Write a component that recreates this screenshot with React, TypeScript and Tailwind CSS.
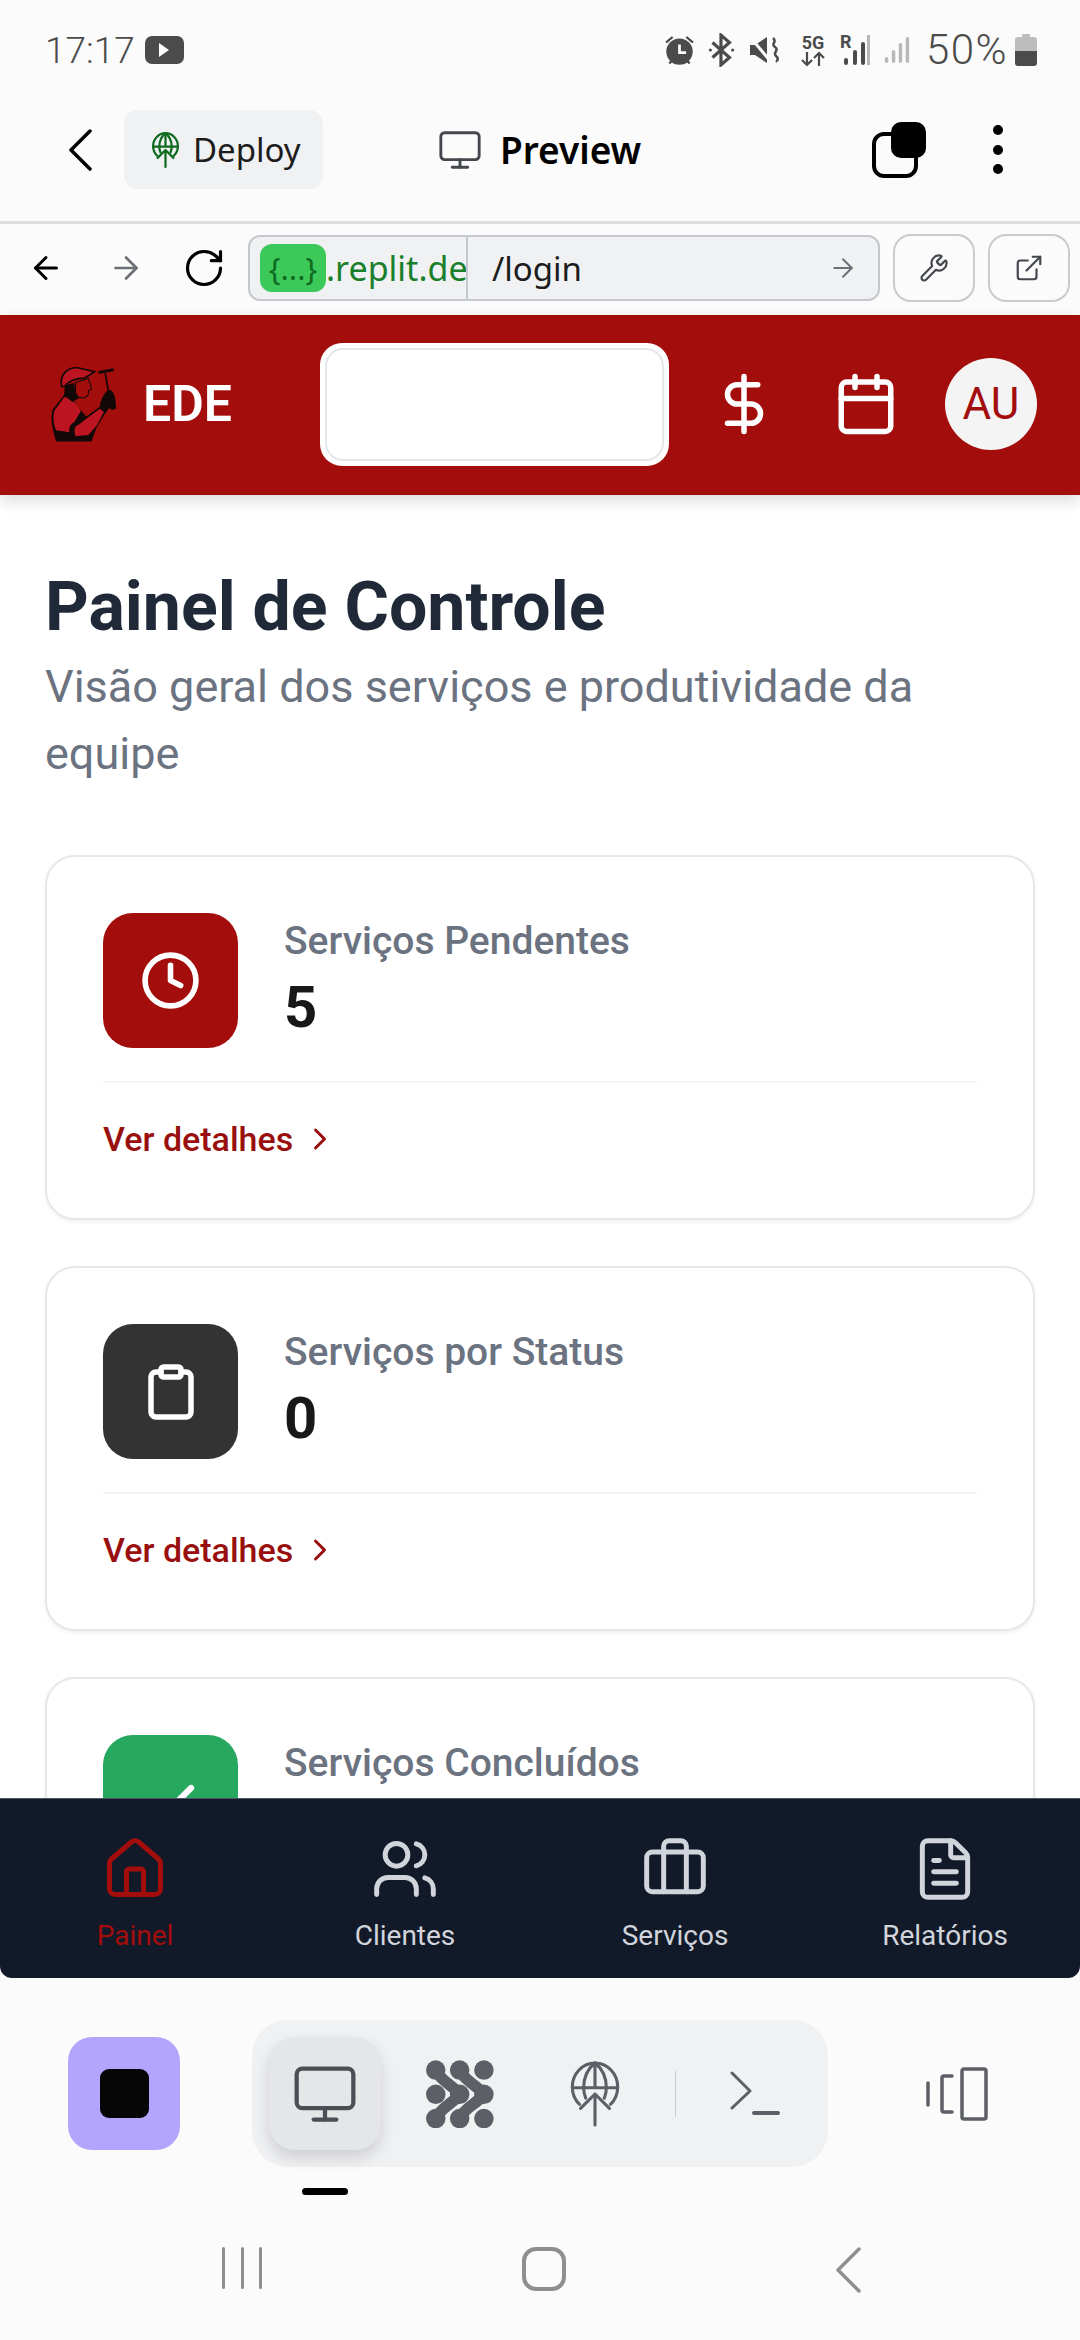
import React from 'react';
import {
  ArrowLeft,
  ArrowRight,
  Briefcase,
  Calendar,
  Check,
  ChevronRight,
  Clipboard,
  Clock,
  DollarSign,
  ExternalLink,
  FileText,
  House,
  Monitor,
  RotateCw,
  Users,
  Wrench,
} from 'lucide-react';

// Globe with an up arrow, used for the deploy tab
const DeployGlobe: React.FC<{ className?: string; strokeWidth?: number }> = ({ className, strokeWidth = 2 }) => (
  <svg viewBox="0 0 24 32" fill="none" stroke="currentColor" strokeWidth={strokeWidth} strokeLinecap="round" strokeLinejoin="round" className={className}>
    <path d="M4.500 21C2.300 19 1 16 1 12.500 1 6.200 6 1 12 1s11 5.200 11 11.500c0 3.500-1.300 6.500-3.500 8.500" />
    <path d="M1 13h22M12 1v12" />
    <path d="M12 1C8.200 4 6.500 8 6.500 13c0 2 .4 3.600 1 5M12 1c3.800 3 5.500 7 5.500 12 0 2-.4 3.600-1 5" />
    <path d="M12 31V16M5 23l7-7 7 7" />
  </svg>
);

// 3x3 dots joined by diagonal links
const AgentIcon: React.FC<{ className?: string }> = ({ className }) => (
  <svg viewBox="78 58 202 202" fill="#5c5f66" className={className}>
    {[107, 178, 250].map((cx) =>
      [88, 160, 232].map((cy) => <circle key={`${cx}-${cy}`} cx={cx} cy={cy} r="29" />),
    )}
    <g fill="none" stroke="#5c5f66" strokeWidth="34">
      <path d="M107 88C125 125 150 125 178 160 150 195 125 195 107 232" />
      <path d="M178 88C196 125 222 125 250 160 222 195 196 195 178 232" />
    </g>
  </svg>
);

const WorkerLogo: React.FC = () => (
  <svg viewBox="95 112 196 224" className="h-[76px] w-[66px]">
    {/* torso, black under the shirt */}
    <path d="M135 196 100 240c-7 24-3 50 10 95h105l15-40 30-50-18-14-42 30-28-32-12-26z" fill="#120808" />
    {/* shirt */}
    <path d="M134 204 105 244c-5 20-2 40 5 58l40 6c-3-14 2-24 14-30l20-34-30-40z" fill="#bc1420" />
    {/* forearm */}
    <path d="M168 290c10-2 20-14 32-22l40-30 12 10-20 38-26 30-38 4c-4-12-4-22 0-30z" fill="#bc1420" />
    {/* hair and neck */}
    <path d="M136 168 134 198l24 20 24-14-14-12-4-30z" fill="#120808" />
    {/* face */}
    <path d="M168 160l38-12 7 22 2 10-8 4-2 14-10 8-18-2-9-12z" fill="#a30d0b" stroke="#120808" strokeWidth="3" strokeLinejoin="round" />
    {/* cap */}
    <path d="M127 172c-8-34 20-66 62-52l36 8-30 19c-24 0-46 6-60 25z" fill="#bc1420" stroke="#120808" strokeWidth="5" strokeLinejoin="round" />
    {/* hammer */}
    <path d="M256 132l9 52" stroke="#120808" strokeWidth="5" fill="none" />
    <path d="M236 131l45-9" stroke="#120808" strokeWidth="8" fill="none" />
    {/* glove */}
    <path d="M240 232c2-20 14-46 28-50 14 2 20 24 20 56l-12 4-8-6-10 14z" fill="#120808" />
  </svg>
);

const StatusIcons: React.FC = () => (
  <div className="flex items-center text-[#4b4b4b]">
    <svg viewBox="0 0 30 30" className="h-[33px] w-[33px]" fill="currentColor">
      <circle cx="15" cy="16" r="12" />
      <path d="M2 7l6-5 1.500 1.500-6 5zM28 7l-6-5-1.500 1.500 6 5zM5 26l3-3 1.500 1.500-3 3zM25 26l-3-3-1.500 1.500 3 3z" />
      <path d="M15 9.500V17h6" stroke="#fbfbfb" strokeWidth="2.500" fill="none" />
    </svg>
    <svg viewBox="0 0 25 32" className="ml-[12px] h-[34px] w-[27px]" fill="none" stroke="currentColor" strokeWidth="3">
      <path d="M4 9l16 14-8 7V2l8 7L4 23" />
      <circle cx="2" cy="16" r="1.500" fill="currentColor" stroke="none" />
      <circle cx="23" cy="16" r="1.500" fill="currentColor" stroke="none" />
    </svg>
    <svg viewBox="0 0 30 30" className="ml-[15px] h-[30px] w-[30px]" fill="currentColor">
      <path d="M0 10h5l12-8v26L5 20H0z" />
      <path d="M1 3l20 24" stroke="#fbfbfb" strokeWidth="3" />
      <path d="M23 3c5 4-3 6 2 9s-3 6 1 9 0 5 1 6" stroke="currentColor" strokeWidth="2.500" fill="none" />
    </svg>
    <div className="ml-[20px] flex w-[26px] flex-col items-center">
      <span className="text-[18px] leading-[17px] font-bold">5G</span>
      <svg viewBox="0 0 26 16" className="h-[16px] w-[26px]" fill="none" stroke="currentColor" strokeWidth="2.200">
        <path d="M7 1v13M2 9l5 5 5-5M19 15V2M14 7l5-5 5 5" />
      </svg>
    </div>
    <div className="ml-[14px] flex h-[32px] w-[30px] items-end">
      <svg viewBox="0 0 30 32" className="h-[32px] w-[30px]">
        <text x="0" y="14" fontSize="18" fontWeight="700" fill="currentColor" fontFamily="Roboto, sans-serif">R</text>
        <rect x="4" y="24" width="4" height="7" rx="2" fill="currentColor" />
        <rect x="13" y="16" width="4" height="15" rx="2" fill="currentColor" />
        <rect x="21" y="8" width="4" height="23" rx="2" fill="currentColor" />
        <rect x="27" y="1" width="3" height="30" fill="#b8b8b8" />
      </svg>
    </div>
    <svg viewBox="0 0 30 32" className="ml-[14px] h-[32px] w-[26px]" fill="#b8b8b8">
      <rect x="1" y="24" width="4" height="7" rx="2" />
      <rect x="9" y="16" width="4" height="15" rx="2" />
      <rect x="17" y="8" width="4" height="23" rx="2" />
      <rect x="25" y="1" width="4" height="30" rx="2" />
    </svg>
    <span className="ml-[16px] w-[82px] text-[42px] leading-none font-light tracking-[1.500px] whitespace-nowrap">50%</span>
    <svg viewBox="0 0 22 32" className="ml-[7px] h-[32px] w-[22px]">
      <path d="M7 0h8v3h4a3 3 0 0 1 3 3v11H0V6a3 3 0 0 1 3-3h4z" fill="#bdbdbd" />
      <path d="M0 17h22v12a3 3 0 0 1-3 3H3a3 3 0 0 1-3-3z" fill="#4b4b4b" />
    </svg>
  </div>
);

interface StatCardProps {
  title: string;
  value: string;
  iconBg: string;
  icon: React.ReactNode;
}

const StatCard: React.FC<StatCardProps> = ({ title, value, iconBg, icon }) => (
  <div className="mb-[46px] h-[365px] shrink-0 rounded-[30px] border-2 border-[#e5e7eb] bg-white px-[56px] pt-[56px] shadow-[0_2px_4px_rgba(0,0,0,0.06)]">
    <div className="flex h-[135px] items-center">
      <div className={`flex h-[135px] w-[135px] items-center justify-center rounded-[30px] ${iconBg}`}>{icon}</div>
      <div className="ml-[46px] flex h-[135px] flex-col pt-[8px]">
        <span className="text-[39px] leading-[40px] font-medium text-[#6b7280]">{title}</span>
        <span className="mt-[11px] text-[58px] leading-[70px] font-bold text-[#18181b]">{value}</span>
      </div>
    </div>
    <div className="mt-[33px] h-[2px] bg-[#f3f4f6]"></div>
    <div className="mt-[36px] flex items-center text-[#990f0d]">
      <span className="text-[34px] leading-[40px] font-medium">Ver detalhes</span>
      <ChevronRight className="ml-[9px] h-[36px] w-[36px]" strokeWidth={2} />
    </div>
  </div>
);

const navItems = [
  { label: 'Painel', icon: House, active: true },
  { label: 'Clientes', icon: Users, active: false },
  { label: 'Serviços', icon: Briefcase, active: false },
  { label: 'Relatórios', icon: FileText, active: false },
];

const App: React.FC = () => {
  return (
    <div className="flex h-[2340px] w-[1080px] flex-col overflow-hidden bg-[#fbfbfb] font-['Roboto',sans-serif]">
      {/* Android status bar */}
      <div className="flex h-[78px] shrink-0 items-center justify-between pt-[22px] pr-[43px] pl-[45px] text-[#4b4b4b]">
        <div className="flex items-center">
          <span className="text-[37px] leading-none font-light">17:17</span>
          <div className="ml-[10px] flex h-[28px] w-[39px] items-center justify-center rounded-[7px] bg-[#4b4b4b]">
            <div className="h-0 w-0 border-y-[7px] border-l-[10px] border-y-transparent border-l-white"></div>
          </div>
        </div>
        <StatusIcons />
      </div>

      {/* Replit tab bar */}
      <div className="flex h-[146px] shrink-0 items-center border-b-[3px] border-[#dcdddf] pl-[68px] font-['Noto_Sans',sans-serif]">
        <svg viewBox="0 0 24 42" className="h-[42px] w-[24px]" fill="none" stroke="#000" strokeWidth="3.500" strokeLinecap="round" strokeLinejoin="round">
          <path d="M22 2 3 21l19 19" />
        </svg>
        <div className="ml-[32px] flex h-[79px] w-[199px] items-center rounded-[14px] bg-[#f0f1f3] pl-[28px]">
          <DeployGlobe className="h-[36px] w-[27px] text-[#0f6b1f]" />
          <span className="ml-[14px] text-[33px] leading-none text-[#1c1c1c]">Deploy</span>
        </div>
        <Monitor className="ml-[114px] h-[46px] w-[46px] text-[#44474d]" strokeWidth={1.500} />
        <span className="ml-[17px] text-[37px] leading-none font-semibold text-black">Preview</span>
        <div className="relative ml-[231px] h-[56px] w-[54px]">
          <div className="absolute bottom-0 left-0 h-[46px] w-[46px] rounded-[12px] border-[4px] border-black"></div>
          <div className="absolute top-0 right-0 h-[36px] w-[35px] rounded-[10px] bg-black"></div>
        </div>
        <div className="ml-[67px] flex h-[49px] flex-col justify-between">
          <div className="h-[10px] w-[10px] rounded-full bg-black"></div>
          <div className="h-[10px] w-[10px] rounded-full bg-black"></div>
          <div className="h-[10px] w-[10px] rounded-full bg-black"></div>
        </div>
      </div>

      {/* Preview address bar */}
      <div className="flex h-[91px] shrink-0 items-center pb-[3px] pl-[28px] font-['Noto_Sans',sans-serif]">
        <ArrowLeft className="h-[36px] w-[36px] text-black" strokeWidth={2} />
        <ArrowRight className="ml-[44px] h-[36px] w-[36px] text-[#6b6f76]" strokeWidth={1.750} />
        <RotateCw className="ml-[38px] h-[44px] w-[44px] text-black" strokeWidth={1.750} />
        <div className="ml-[22px] flex h-[66px] w-[632px] items-center overflow-hidden rounded-[12px] border-2 border-[#c4c7cb] bg-[#f0f1f3]">
          <div className="flex h-full w-[218px] shrink-0 items-center overflow-hidden border-r-2 border-[#c4c7cb] pl-[10px]">
            <span className="flex h-[48px] w-[66px] shrink-0 items-center justify-center rounded-[12px] bg-[#3cc95a] text-[31px] leading-none text-[#0f6b1f]">{'{...}'}</span>
            <span className="text-[34px] leading-none whitespace-nowrap text-[#1a7f2b]">.replit.dev</span>
          </div>
          <span className="ml-[24px] flex-1 text-[33px] leading-none text-[#1c1c1c]">/login</span>
          <ArrowRight className="mr-[20px] h-[30px] w-[30px] text-[#6b6f76]" strokeWidth={1.500} />
        </div>
        <div className="ml-[13px] flex h-[68px] w-[82px] items-center justify-center rounded-[18px] border-2 border-[#c9cbcf]">
          <Wrench className="h-[30px] w-[30px] text-[#44474d]" strokeWidth={1.750} />
        </div>
        <div className="ml-[13px] flex h-[68px] w-[82px] items-center justify-center rounded-[18px] border-2 border-[#c9cbcf]">
          <ExternalLink className="h-[30px] w-[30px] text-[#44474d]" strokeWidth={1.750} />
        </div>
      </div>

      {/* App header */}
      <header className="relative z-10 flex h-[180px] shrink-0 items-center bg-[#a30d0b] pb-[2px] pl-[51px] shadow-[0_6px_14px_rgba(0,0,0,0.14)]">
        <WorkerLogo />
        <span className="ml-[26px] text-[50px] leading-none font-semibold text-white">EDE</span>
        <div className="ml-[88px] h-[123px] w-[349px] rounded-[22px] bg-white p-[5px]">
          <div className="h-full w-full rounded-[18px] border-2 border-[#e5e7eb]"></div>
        </div>
        <DollarSign className="ml-[42px] h-[66px] w-[66px] text-white" strokeWidth={2} />
        <Calendar className="ml-[56px] h-[66px] w-[66px] text-white" strokeWidth={2} />
        <div className="ml-[46px] flex h-[92px] w-[92px] items-center justify-center rounded-full bg-[#f4f4f4] text-[44px] leading-none text-[#a30d0b]">AU</div>
      </header>

      {/* Dashboard content, cut off by the bottom navigation */}
      <main className="flex h-[1303px] shrink-0 flex-col overflow-hidden bg-white px-[45px] pt-[74px]">
        <h1 className="text-[68px] leading-[76px] font-bold text-[#1f2937]">Painel de Controle</h1>
        <p className="mt-[8px] text-[45px] leading-[67px] text-[#6b7280]">Visão geral dos serviços e produtividade da equipe</p>
        <div className="mt-[68px] flex flex-col">
          <StatCard title="Serviços Pendentes" value="5" iconBg="bg-[#a30d0b]" icon={<Clock className="h-[61px] w-[61px] text-white" strokeWidth={2.200} />} />
          <StatCard title="Serviços por Status" value="0" iconBg="bg-[#333333]" icon={<Clipboard className="h-[60px] w-[60px] text-white" strokeWidth={2.200} />} />
          <StatCard title="Serviços Concluídos" value="12" iconBg="bg-[#27a85f]" icon={<Check className="h-[60px] w-[60px] text-white" strokeWidth={2.500} />} />
        </div>
      </main>

      {/* Bottom navigation */}
      <nav className="grid h-[180px] shrink-0 grid-cols-4 rounded-b-[12px] border-t border-[#4b5563] bg-[#121a2a]">
        {navItems.map((item) => {
          const Icon = item.icon;
          return (
            <div key={item.label} className={`flex flex-col items-center pt-[36px] ${item.active ? 'text-[#a30d0b]' : 'text-[#d1d5db]'}`}>
              <Icon className="h-[68px] w-[68px]" strokeWidth={1.750} />
              <span className="mt-[17px] text-[28px] leading-[32px]">{item.label}</span>
            </div>
          );
        })}
      </nav>

      {/* Replit tool dock */}
      <div className="flex h-[190px] shrink-0 items-start pt-[42px]">
        <div className="mt-[17px] ml-[68px] flex h-[113px] w-[112px] items-center justify-center rounded-[24px] bg-[#b3a4fd]">
          <div className="h-[49px] w-[49px] rounded-[9px] bg-[#060606]"></div>
        </div>
        <div className="ml-[72px] flex h-[147px] w-[576px] items-center rounded-[36px] bg-[#f0f1f3] pl-[17px]">
          <div className="flex h-[113px] w-[112px] items-center justify-center rounded-[26px] bg-[#e5e6e8] shadow-[0_8px_16px_rgba(0,0,0,0.14)]">
            <Monitor className="h-[68px] w-[68px] text-[#4b4e55]" strokeWidth={1.500} />
          </div>
          <AgentIcon className="ml-[45px] h-[68px] w-[68px]" />
          <DeployGlobe className="ml-[76px] h-[66px] w-[50px] text-[#5c5f66]" strokeWidth={1.500} />
          <div className="ml-[55px] h-[46px] w-px bg-[#c9cbcf]"></div>
          <svg viewBox="0 0 50 46" className="ml-[54px] h-[46px] w-[50px]" fill="none" stroke="#5c5f66" strokeWidth="3" strokeLinecap="round" strokeLinejoin="round">
            <path d="M2 2l18 18L2 37" />
            <path d="M24 42h24" strokeWidth="4" />
          </svg>
        </div>
        <svg viewBox="0 0 62 54" className="mt-[47px] ml-[98px] h-[54px] w-[62px]" fill="none" stroke="#5c5f66" strokeWidth="3.500" strokeLinecap="round" strokeLinejoin="round">
          <rect x="36" y="2" width="24" height="50" rx="2" />
          <path d="M26 9h-8a2 2 0 0 0-2 2v32a2 2 0 0 0 2 2h8" />
          <path d="M2 16v22" />
        </svg>
      </div>

      {/* Android navigation bar */}
      <div className="relative flex-1">
        <div className="absolute top-[20px] left-[302px] h-[7px] w-[46px] rounded-full bg-black"></div>
        <div className="flex h-full items-start pt-[79px]">
          <div className="ml-[222px] flex h-[42px] w-[40px] justify-between">
            <div className="w-[3px] rounded-full bg-[#8f8f8f]"></div>
            <div className="w-[3px] rounded-full bg-[#8f8f8f]"></div>
            <div className="w-[3px] rounded-full bg-[#8f8f8f]"></div>
          </div>
          <div className="ml-[260px] h-[44px] w-[44px] rounded-[14px] border-[4px] border-[#8f8f8f]"></div>
          <svg viewBox="0 0 26 46" className="ml-[269px] h-[46px] w-[26px]" fill="none" stroke="#8f8f8f" strokeWidth="3.500" strokeLinecap="round" strokeLinejoin="round">
            <path d="M24 2 3 23l21 21" />
          </svg>
        </div>
      </div>
    </div>
  );
};

export default App;
